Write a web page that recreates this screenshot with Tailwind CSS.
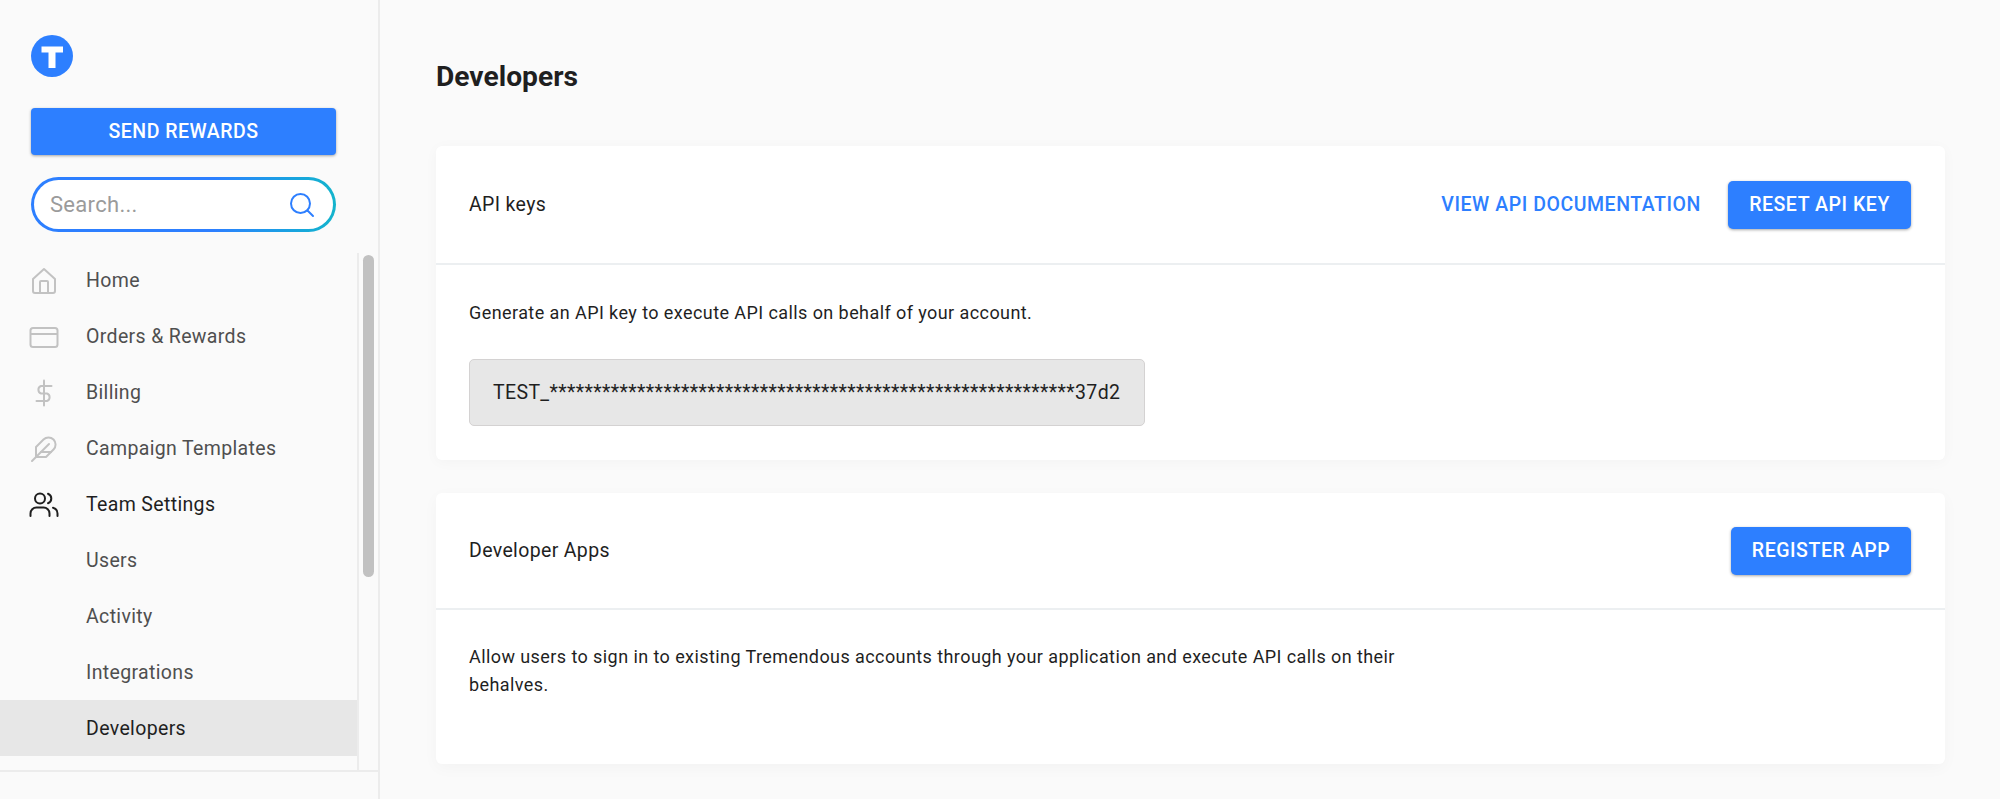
<!DOCTYPE html>
<html lang="en">
<head>
    <meta charset="UTF-8">
    <title>Developers</title>
    <script src="https://cdn.jsdelivr.net/npm/@tailwindcss/browser@4"></script>
</head>
<body class="bg-[#fafafa] font-['Roboto',sans-serif] text-[#1f1f1f] overflow-hidden">
<div class="flex h-[799px] w-[2000px] overflow-hidden">

    <!-- Sidebar -->
    <aside class="flex h-full w-[380px] shrink-0 flex-col border-r-2 border-[#ececec]">
        <div class="pl-[31px] pr-[30px] pt-[35px]">
            <svg class="block h-[42px] w-[42px]" viewBox="0 0 42 42">
                <circle cx="21" cy="21" r="21" fill="#2d7fff"/>
                <path d="M10.5 11.5h21.5v6h-7.5V33h-7V17.5h-7z" fill="#fff"/>
            </svg>
            <button class="mt-[31px] block h-[47px] w-[305px] rounded-[4px] bg-[#2d7fff] pt-[1px] text-[19.5px] font-medium tracking-[0.5px] text-white shadow-[0_1px_3px_rgba(0,0,0,0.35)]">SEND REWARDS</button>
            <div class="mt-[22px] h-[55px] w-[305px] rounded-full bg-linear-to-r from-[#2d7fff] from-60% to-[#14b4cc] p-[3px]">
                <div class="flex h-full items-center justify-between rounded-full bg-white pl-[16px] pr-[18px]">
                    <span class="text-[22px] tracking-[0.3px] text-[#9b9b9b]">Search...</span>
                    <svg class="h-[26px] w-[26px]" viewBox="0 0 26 26" fill="none" stroke="#2d7fff" stroke-width="2" stroke-linecap="round">
                        <circle cx="11.5" cy="11.5" r="9.5"/>
                        <path d="M18.5 18.5l5.5 5.5"/>
                    </svg>
                </div>
            </div>
        </div>

        <div class="mt-[21px] flex min-h-0 flex-1 border-b-2 border-[#ececec]">
            <nav class="w-[359px] shrink-0 border-r-2 border-[#ececec] text-[19.5px] tracking-[0.35px] text-[#4f4f4f]">
                <a class="mt-[-1px] flex h-[56px] items-center pt-[2px]">
                    <span class="flex w-[86px] justify-center pl-[2px]">
                        <svg class="h-[28px] w-[28px]" viewBox="0 0 28 28" fill="none" stroke="#c2c2c2" stroke-width="2" stroke-linejoin="round">
                            <path d="M3 12L14 2l11 10v12a2 2 0 0 1-2 2H5a2 2 0 0 1-2-2z"/>
                            <path d="M10 26V15a1 1 0 0 1 1-1h6a1 1 0 0 1 1 1v11"/>
                        </svg>
                    </span>
                    Home
                </a>
                <a class="flex h-[56px] items-center pt-[2px]">
                    <span class="flex w-[86px] justify-center pl-[2px]">
                        <svg class="h-[28px] w-[30px]" viewBox="0 0 30 28" fill="none" stroke="#c2c2c2" stroke-width="2">
                            <rect x="1.5" y="5" width="27" height="19" rx="2.5"/>
                            <path d="M1.5 11h27"/>
                        </svg>
                    </span>
                    Orders &amp; Rewards
                </a>
                <a class="flex h-[56px] items-center pt-[2px]">
                    <span class="flex w-[86px] justify-center pl-[2px]">
                        <svg class="h-[28px] w-[28px]" viewBox="0 0 28 28" fill="none" stroke="#c2c2c2" stroke-width="2" stroke-linecap="round">
                            <path d="M14 1.5v25"/>
                            <path d="M21.5 7H11a4 4 0 0 0 0 7.5h6a4 4 0 0 1 0 7.5H6.5"/>
                        </svg>
                    </span>
                    Billing
                </a>
                <a class="flex h-[56px] items-center pt-[2px]">
                    <span class="flex w-[86px] justify-center pl-[2px]">
                        <svg class="h-[28px] w-[28px]" viewBox="0 0 28 28" fill="none" stroke="#c2c2c2" stroke-width="2" stroke-linecap="round" stroke-linejoin="round">
                            <path d="M23.5 14.5a7 7 0 0 0-10-10L6 12v10h10z"/>
                            <path d="M19 9L2 26"/>
                            <path d="M21 17H11"/>
                        </svg>
                    </span>
                    Campaign Templates
                </a>
                <a class="flex h-[56px] items-center pt-[2px] text-[#1f1f1f]">
                    <span class="flex w-[86px] justify-center pl-[2px]">
                        <svg class="h-[28px] w-[30px]" viewBox="0 0 30 28" fill="none" stroke="#1f1f1f" stroke-width="2" stroke-linecap="round">
                            <circle cx="11" cy="7.5" r="5"/>
                            <path d="M1.5 25v-2.5a6 6 0 0 1 6-6h7a6 6 0 0 1 6 6V25"/>
                            <path d="M19 2.8a5 5 0 0 1 0 9.4"/>
                            <path d="M28.5 25v-2.5a6 6 0 0 0-4.5-5.8"/>
                        </svg>
                    </span>
                    Team Settings
                </a>
                <a class="flex h-[56px] items-center pl-[86px] pt-[2px]">Users</a>
                <a class="flex h-[56px] items-center pl-[86px] pt-[2px]">Activity</a>
                <a class="flex h-[56px] items-center pl-[86px] pt-[2px]">Integrations</a>
                <a class="flex h-[56px] items-center bg-[#e7e7e7] pl-[86px] pt-[2px] text-[#1f1f1f]">Developers</a>
            </nav>
            <div class="flex-1 pl-[4px] pt-[2px]">
                <div class="h-[322px] w-[11px] rounded-full bg-[#c1c1c1]"></div>
            </div>
        </div>
        <div class="h-[27px]"></div>
    </aside>

    <!-- Main -->
    <main class="flex-1 pl-[56px] pr-[55px]">
        <h1 class="mt-[61px] h-[32px] text-[28.2px] leading-[32px] font-bold">Developers</h1>

        <section class="mt-[53px] h-[314px] rounded-[6px] bg-white shadow-[0_2px_14px_rgba(0,0,0,0.03)]">
            <div class="flex h-[119px] items-center justify-between border-b-2 border-[#eceff1] pl-[33px] pr-[34px]">
                <span class="text-[19.5px] tracking-[0.35px]">API keys</span>
                <div class="flex items-center">
                    <a class="mr-[27px] text-[19.5px] font-medium tracking-[0.55px] text-[#2d7fff]">VIEW API DOCUMENTATION</a>
                    <button class="h-[48px] w-[183px] rounded-[5px] bg-[#2d7fff] text-[19.5px] font-medium tracking-[0.55px] text-white shadow-[0_1px_3px_rgba(0,0,0,0.35)]">RESET API KEY</button>
                </div>
            </div>
            <div class="pl-[33px] pt-[36px]">
                <p class="text-[18px] leading-[24px] tracking-[0.42px]">Generate an API key to execute API calls on behalf of your account.</p>
                <div class="mt-[34px] flex h-[67px] w-[676px] items-center rounded-[5px] border border-[#d4d2d2] bg-[#e7e7e7] pl-[23px] text-[19.5px] tracking-[0.36px]">TEST_************************************************************37d2</div>
            </div>
        </section>

        <section class="mt-[33px] h-[271px] rounded-[6px] bg-white shadow-[0_4px_16px_rgba(0,0,0,0.03)]">
            <div class="flex h-[117px] items-center justify-between border-b-2 border-[#eceff1] pl-[33px] pr-[34px]">
                <span class="text-[19.5px] tracking-[0.35px]">Developer Apps</span>
                <button class="h-[48px] w-[180px] rounded-[5px] bg-[#2d7fff] text-[19.5px] font-medium tracking-[0.55px] text-white shadow-[0_1px_3px_rgba(0,0,0,0.35)]">REGISTER APP</button>
            </div>
            <div class="pl-[33px] pt-[33px]">
                <p class="w-[960px] text-[18px] leading-[28px] tracking-[0.42px]">Allow users to sign in to existing Tremendous accounts through your application and execute API calls on their behalves.</p>
            </div>
        </section>
    </main>
</div>
</body>
</html>
